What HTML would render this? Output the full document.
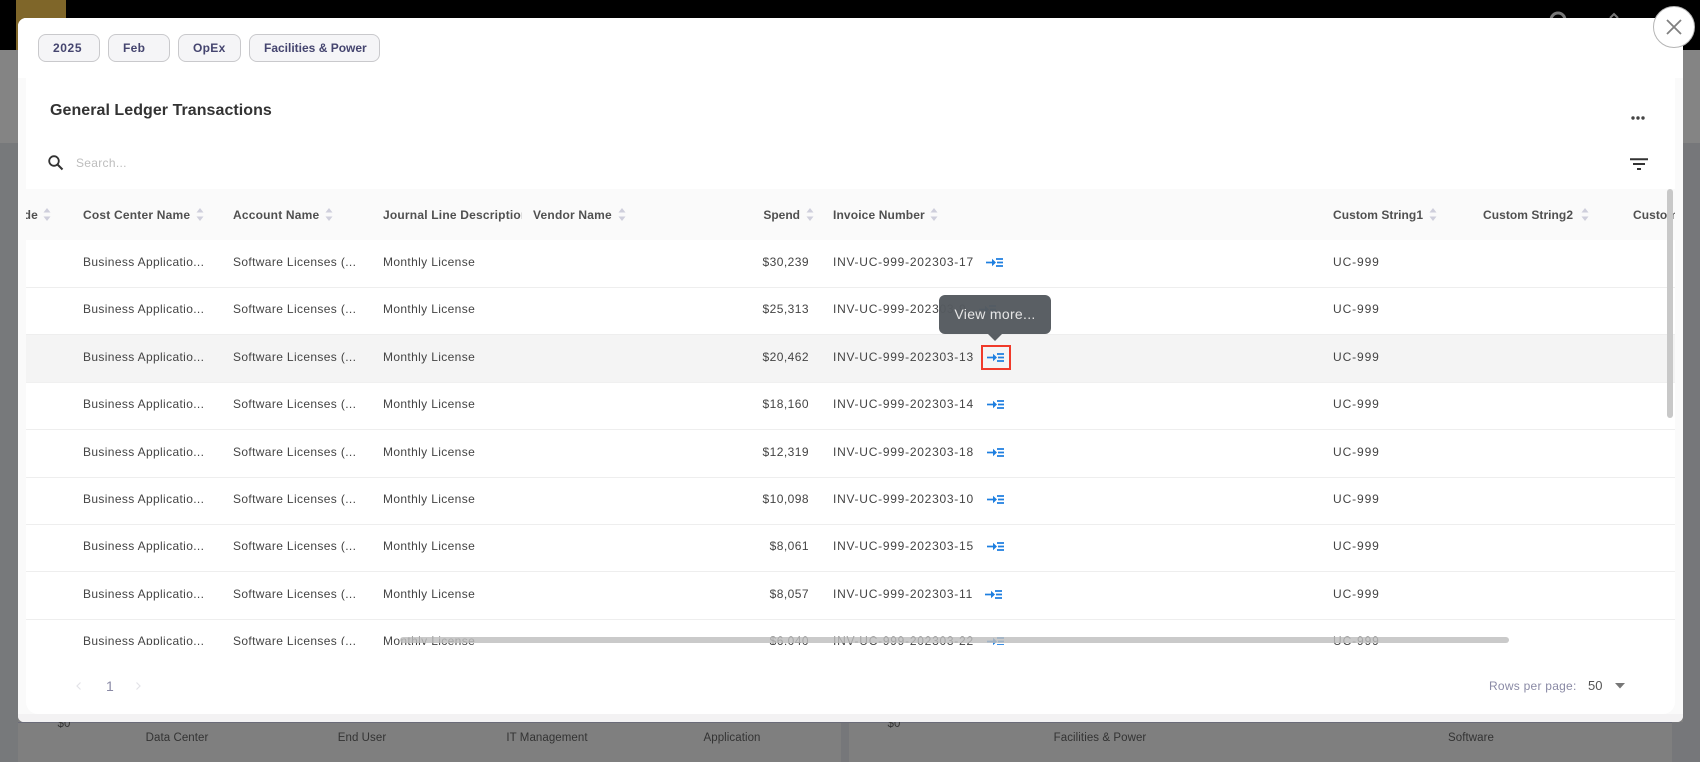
<!DOCTYPE html>
<html><head><meta charset="utf-8"><style>
html,body{margin:0;padding:0;width:1700px;height:762px;overflow:hidden;background:#7f7f7f;font-family:"Liberation Sans",sans-serif}
div,span,svg{position:absolute;box-sizing:border-box}
.t{white-space:nowrap;font-size:12px;letter-spacing:.36px;line-height:16px;color:#444;top:14px}
.i{letter-spacing:.74px;left:807px}
.s{letter-spacing:.45px;right:866px}
.u{letter-spacing:.9px;left:1307px}
.h{white-space:nowrap;font-size:12px;letter-spacing:.2px;line-height:16px;color:#505050;font-weight:bold;top:18px}
.chip{top:34px;height:28px;border:1px solid #c9c9cc;border-radius:8px;background:#f5f5f7;color:#45456f;font-size:12px;font-weight:bold;letter-spacing:.3px;line-height:26px;text-align:left}
.bg{font-size:11.5px;letter-spacing:.07px;color:#333;top:730px;line-height:16px;white-space:nowrap;transform:translateX(-50%)}
.row{left:0;width:1649px;height:48px;border-bottom:1px solid #eee}
</style></head><body>
<svg width="0" height="0" style="position:absolute"><defs>
<symbol id="ic" viewBox="0 0 17 9"><path d="M0 4.500H7" stroke="#1e7fe0" stroke-width="1.700" fill="none"/><path d="M6 .8L10 4.500L6 8.200Z" fill="#1e7fe0"/><path d="M10 1H17M11 4.500H17M10 8H17" stroke="#1e7fe0" stroke-width="1.700" fill="none"/></symbol>
<symbol id="so" viewBox="0 0 8 13"><path d="M4 0L7.500 4.500H.5Z M4 13L7.500 8.500H.5Z" fill="#cfcfdc"/></symbol>
</defs></svg>

<!-- background page -->
<div style="left:0;top:0;width:1700px;height:50px;background:#000"></div>
<div style="left:16px;top:0;width:50px;height:50px;background:#7f6629"></div>
<div style="left:0;top:50px;width:1700px;height:93px;background:#848484"></div>
<div style="left:0;top:143px;width:18px;height:619px;background:#77797b"></div>
<div style="left:1683px;top:143px;width:17px;height:619px;background:#76777a"></div>
<div style="left:841px;top:722px;width:8px;height:40px;background:#76777a"></div>
<div style="left:1672px;top:722px;width:28px;height:40px;background:#76777a"></div>
<div style="left:0;top:722px;width:18px;height:40px;background:#77797b"></div>
<div style="left:18px;top:722px;width:1654px;height:1px;background:#6a6b78"></div>
<div class="bg" style="left:64px;top:716px">$0</div>
<div class="bg" style="left:894px;top:716px">$0</div>
<div class="bg" style="left:177px">Data Center</div>
<div class="bg" style="left:362px">End User</div>
<div class="bg" style="left:547px">IT Management</div>
<div class="bg" style="left:732px">Application</div>
<div class="bg" style="left:1100px">Facilities &amp; Power</div>
<div class="bg" style="left:1471px">Software</div>
<svg style="left:1545px;top:10px" width="100" height="10"><circle cx="13" cy="10" r="7" fill="none" stroke="#777" stroke-width="3"/><path d="M65 8l4-4 4 4" fill="none" stroke="#777" stroke-width="2"/></svg>

<!-- modal -->
<div style="left:18px;top:18px;width:1665px;height:704px;background:#fafafa;border-radius:8px 0 6px 6px"></div>
<div style="left:18px;top:714px;width:1665px;height:8px;background:#f3f2f3;border-radius:0 0 6px 6px"></div>
<div style="left:18px;top:18px;width:1665px;height:60px;background:#fff;border-radius:8px 0 0 0"></div>
<div style="left:26px;top:60px;width:1649px;height:654px;background:#fff;border-radius:0 0 12px 12px"></div>

<div class="chip" style="left:38px;width:62px;padding-left:14px;letter-spacing:.6px">2025</div>
<div class="chip" style="left:108px;width:62px;padding-left:14px">Feb</div>
<div class="chip" style="left:178px;width:63px;padding-left:14px">OpEx</div>
<div class="chip" style="left:249px;width:131px;padding-left:14px;letter-spacing:0">Facilities &amp; Power</div>

<div style="left:50px;top:101px;font-size:16px;line-height:20px;font-weight:bold;color:#333;letter-spacing:.05px;white-space:nowrap">General Ledger Transactions</div>
<svg style="left:1630px;top:114px" width="16" height="8"><circle cx="3" cy="4" r="1.700" fill="#444"/><circle cx="8" cy="4" r="1.700" fill="#444"/><circle cx="13" cy="4" r="1.700" fill="#444"/></svg>

<svg style="left:47px;top:154px" width="18" height="18" viewBox="0 0 18 18"><circle cx="7" cy="7" r="4.800" fill="none" stroke="#333" stroke-width="1.800"/><path d="M10.500 10.500L15.500 15.500" stroke="#333" stroke-width="2"/></svg>
<div style="left:76px;top:155px;font-size:12px;letter-spacing:.3px;line-height:16px;color:#bdbdbd">Search...</div>
<svg style="left:1630px;top:158px" width="18" height="13"><path d="M0 1.200H18M3 6H15M7 11H11" stroke="#333" stroke-width="2"/></svg>

<!-- table -->
<div style="left:26px;top:189px;width:1649px;height:456px;overflow:hidden">
  <div style="left:0;top:0;width:1649px;height:51px;background:#fafafa"></div>
  <div style="left:0;top:0;width:1649px;height:51px;overflow:hidden;">
    <div class="h" style="right:1637px">Code</div><svg style="left:17px;top:19px" width="8" height="13"><use href="#so"/></svg>
    <div class="h" style="left:57px">Cost Center Name</div><svg style="left:170px;top:19px" width="8" height="13"><use href="#so"/></svg>
    <div class="h" style="left:207px">Account Name</div><svg style="left:299px;top:19px" width="8" height="13"><use href="#so"/></svg>
    <div style="left:357px;top:0;width:139px;height:51px;overflow:hidden"><div class="h" style="left:0">Journal Line Description</div></div>
    <div class="h" style="left:507px">Vendor Name</div><svg style="left:592px;top:19px" width="8" height="13"><use href="#so"/></svg>
    <div class="h" style="right:875px;letter-spacing:0">Spend</div><svg style="left:780px;top:19px" width="8" height="13"><use href="#so"/></svg>
    <div class="h" style="left:807px;letter-spacing:.13px">Invoice Number</div><svg style="left:904px;top:19px" width="8" height="13"><use href="#so"/></svg>
    <div class="h" style="left:1307px;letter-spacing:.05px">Custom String1</div><svg style="left:1403px;top:19px" width="8" height="13"><use href="#so"/></svg>
    <div class="h" style="left:1457px;letter-spacing:.05px">Custom String2</div><svg style="left:1555px;top:19px" width="8" height="13"><use href="#so"/></svg>
    <div class="h" style="left:1607px;letter-spacing:.05px">Custom String3</div>
  </div>

  <div class="row" style="top:51px"><div class="t" style="left:57px">Business Applicatio...</div><div class="t" style="left:207px">Software Licenses (...</div><div class="t" style="left:357px">Monthly License</div><div class="t s">$30,239</div><div class="t i">INV-UC-999-202303-17</div><svg style="left:960px;top:18px" width="17" height="9"><use href="#ic"/></svg><div class="t u">UC-999</div></div>
  <div class="row" style="top:98.4px"><div class="t" style="left:57px">Business Applicatio...</div><div class="t" style="left:207px">Software Licenses (...</div><div class="t" style="left:357px">Monthly License</div><div class="t s">$25,313</div><div class="t i">INV-UC-999-202303-9</div><svg style="left:953px;top:18px" width="17" height="9"><use href="#ic"/></svg><div class="t u">UC-999</div></div>
  <div class="row" style="top:145.8px;background:#f4f4f4;border-bottom-color:#f0f0f0"><div class="t" style="left:57px">Business Applicatio...</div><div class="t" style="left:207px">Software Licenses (...</div><div class="t" style="left:357px">Monthly License</div><div class="t s">$20,462</div><div class="t i">INV-UC-999-202303-13</div><svg style="left:961px;top:18px" width="17" height="9"><use href="#ic"/></svg><div class="t u">UC-999</div></div>
  <div class="row" style="top:193.2px"><div class="t" style="left:57px">Business Applicatio...</div><div class="t" style="left:207px">Software Licenses (...</div><div class="t" style="left:357px">Monthly License</div><div class="t s">$18,160</div><div class="t i">INV-UC-999-202303-14</div><svg style="left:961px;top:18px" width="17" height="9"><use href="#ic"/></svg><div class="t u">UC-999</div></div>
  <div class="row" style="top:240.6px"><div class="t" style="left:57px">Business Applicatio...</div><div class="t" style="left:207px">Software Licenses (...</div><div class="t" style="left:357px">Monthly License</div><div class="t s">$12,319</div><div class="t i">INV-UC-999-202303-18</div><svg style="left:961px;top:18px" width="17" height="9"><use href="#ic"/></svg><div class="t u">UC-999</div></div>
  <div class="row" style="top:288px"><div class="t" style="left:57px">Business Applicatio...</div><div class="t" style="left:207px">Software Licenses (...</div><div class="t" style="left:357px">Monthly License</div><div class="t s">$10,098</div><div class="t i">INV-UC-999-202303-10</div><svg style="left:961px;top:18px" width="17" height="9"><use href="#ic"/></svg><div class="t u">UC-999</div></div>
  <div class="row" style="top:335.4px"><div class="t" style="left:57px">Business Applicatio...</div><div class="t" style="left:207px">Software Licenses (...</div><div class="t" style="left:357px">Monthly License</div><div class="t s">$8,061</div><div class="t i">INV-UC-999-202303-15</div><svg style="left:961px;top:18px" width="17" height="9"><use href="#ic"/></svg><div class="t u">UC-999</div></div>
  <div class="row" style="top:382.8px"><div class="t" style="left:57px">Business Applicatio...</div><div class="t" style="left:207px">Software Licenses (...</div><div class="t" style="left:357px">Monthly License</div><div class="t s">$8,057</div><div class="t i">INV-UC-999-202303-11</div><svg style="left:959px;top:18px" width="17" height="9"><use href="#ic"/></svg><div class="t u">UC-999</div></div>
  <div class="row" style="top:430.2px;border:0"><div class="t" style="left:57px">Business Applicatio...</div><div class="t" style="left:207px">Software Licenses (...</div><div class="t" style="left:357px">Monthly License</div><div class="t s">$6,040</div><div class="t i">INV-UC-999-202303-22</div><svg style="left:961px;top:18px" width="17" height="9"><use href="#ic"/></svg><div class="t u">UC-999</div></div>
</div>

<!-- scrollbars -->
<div style="left:1667px;top:189px;width:6px;height:229px;background:#c8c8c8;border-radius:3px"></div>
<div style="left:400px;top:637px;width:1109px;height:6px;background:rgba(190,190,190,.82);border-radius:3px"></div>

<!-- highlight + tooltip -->
<div style="left:981px;top:345px;width:30px;height:25px;border:2px solid #f03a2a"></div>
<div style="left:939px;top:295px;width:112px;height:39px;background:rgba(85,90,95,.97);border-radius:6px;color:#e6e6e6;font-size:14px;letter-spacing:.3px;line-height:39px;text-align:center">View more...</div>
<svg style="left:988px;top:334px" width="14" height="7"><path d="M0 0H14L7 7Z" fill="#595e63"/></svg>

<!-- pagination -->
<svg style="left:75px;top:681px" width="8" height="10"><path d="M5.500 1.500L2 5l3.500 3.500" fill="none" stroke="#e3e3e8" stroke-width="1.200"/></svg>
<div style="left:106px;top:678px;font-size:14px;line-height:16px;color:#8a8aa5">1</div>
<svg style="left:134px;top:681px" width="8" height="10"><path d="M2.500 1.500L6 5 2.500 8.500" fill="none" stroke="#e3e3e8" stroke-width="1.200"/></svg>
<div style="left:1489px;top:678px;font-size:12px;letter-spacing:.25px;line-height:16px;color:#8a8aa5;white-space:nowrap">Rows per page:</div>
<div style="left:1588px;top:678px;font-size:13px;line-height:16px;color:#555">50</div>
<svg style="left:1615px;top:683px" width="10" height="6"><path d="M0 0H10L5 5.500Z" fill="#777"/></svg>

<!-- close -->
<div style="left:1654px;top:7px;width:16px;height:10px;overflow:hidden"><div style="left:0;top:0;width:42px;height:42px;border-radius:50%;background:#1a6aa8"></div></div>
<div style="left:1653px;top:6px;width:42px;height:42px;border-radius:50%;background:#fff;border:1px solid #b5b5b5"></div>
<svg style="left:1666px;top:19px" width="16" height="16"><path d="M1 1L15 15M15 1L1 15" stroke="#808080" stroke-width="1.800"/></svg>
</body></html>
